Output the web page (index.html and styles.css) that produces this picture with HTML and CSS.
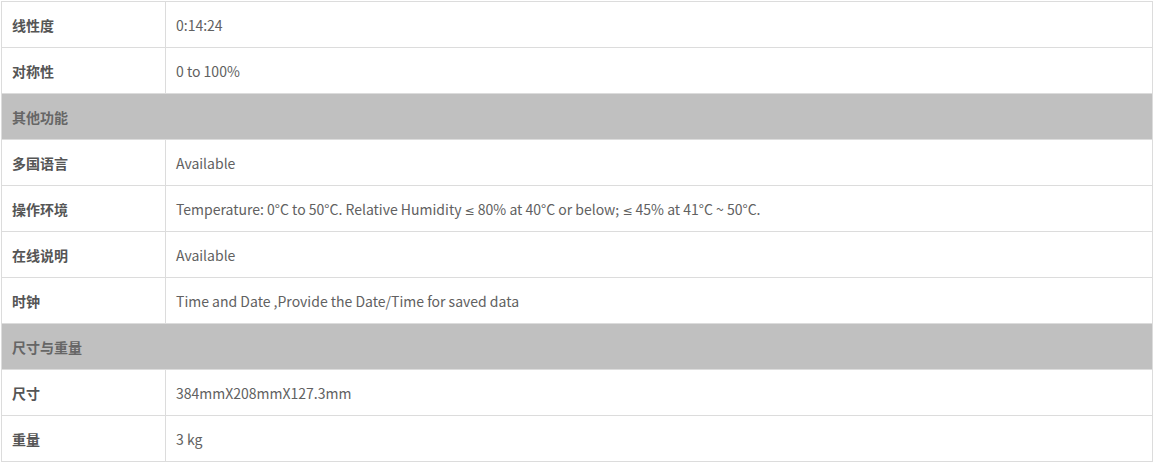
FILE: index.html
```html
<!DOCTYPE html>
<html lang="zh-CN">
<head>
<meta charset="utf-8">
<link rel="stylesheet" href="styles.css">
</head>
<body>
<table class="spec">
  <colgroup><col class="c1"><col class="c2"></colgroup>
  <tbody>
    <tr><th>线性度</th><td>0:14:24</td></tr>
    <tr><th>对称性</th><td>0 to 100%</td></tr>
    <tr class="group"><th colspan="2">其他功能</th></tr>
    <tr><th>多国语言</th><td>Available</td></tr>
    <tr><th>操作环境</th><td>Temperature: 0°C to 50°C. Relative Humidity <span class="sym">≤</span> 80% at 40°C or below; <span class="sym">≤</span> 45% at 41°C ~ 50°C.</td></tr>
    <tr><th>在线说明</th><td>Available</td></tr>
    <tr><th>时钟</th><td>Time and Date ,Provide the Date/Time for saved data</td></tr>
    <tr class="group"><th colspan="2">尺寸与重量</th></tr>
    <tr><th>尺寸</th><td>384mmX208mmX127.3mm</td></tr>
    <tr><th>重量</th><td>3 kg</td></tr>
  </tbody>
</table>
</body>
</html>
```
FILE: styles.css
```css
html, body {
  margin: 0;
  padding: 0;
  background: #fff;
}
body {
  padding: 1px 0 0 1px;
  font-family: "Noto Sans CJK SC", "Noto Sans", sans-serif;
  font-size: 14px;
}
.spec {
  border-collapse: collapse;
  width: 1152px;
  table-layout: fixed;
}
.c1 { width: 164px; }
.spec th, .spec td {
  border: 1px solid #dcdcdc;
  height: 46px;
  padding: 0 0 0 10px;
  box-sizing: border-box;
  text-align: left;
  vertical-align: middle;
}
.spec th {
  font-weight: bold;
  color: #555;
}
.spec td {
  color: #616161;
}
.spec .group th {
  background: #c0c0c0;
  color: #666;
}
.sym {
  font-family: "DejaVu Sans", sans-serif;
  font-size: 12px;
}
```
